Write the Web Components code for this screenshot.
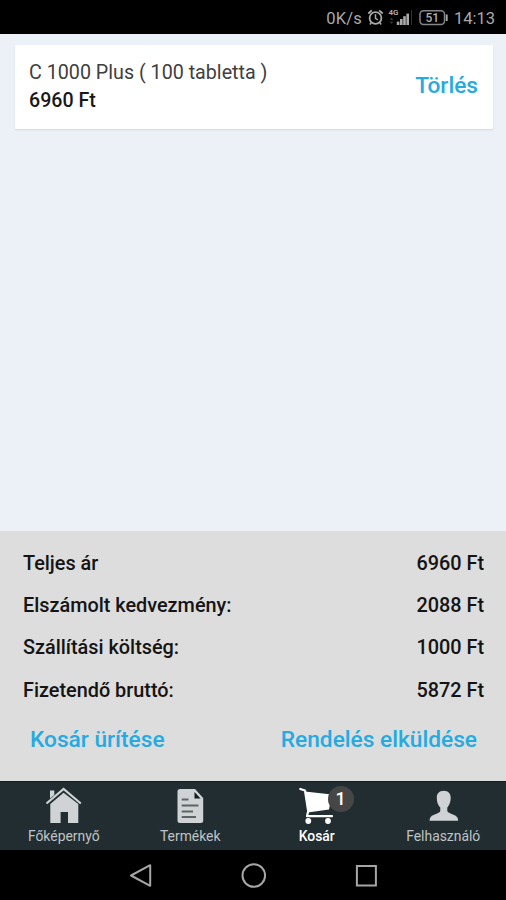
<!DOCTYPE html>
<html lang="hu">
<head>
<meta charset="utf-8">
<title>Kosár</title>
<style>
html, body {
	margin: 0;
	height: 100%;
}
body {
	font-family: Roboto, "Liberation Sans", sans-serif;
	overflow: hidden;
}
</style>
</head>
<body>
<shop-app></shop-app>

<script>
function makeTemplate(html) {
	const template = document.createElement('template')
	template.innerHTML = html
	return template
}

class BaseElement extends HTMLElement {

	constructor(template) {
		super()
		this.attachShadow({ mode: 'open' })
		this.shadowRoot.appendChild(template.content.cloneNode(true))
	}

}

// ---- status bar

const statusTemplate = makeTemplate(`
<style>
:host {
	display: flex;
	align-items: center;
	justify-content: flex-end;
	box-sizing: border-box;
	height: 34px;
	padding: 2px 11px 0 0;
	background: #000;
	color: #a9a9a9;
	font-size: 16.5px;
	line-height: 20px;
	white-space: nowrap;
}
svg { display: block; flex: none; }
.speed { margin: 1px 5px 0 0; letter-spacing: 0.2px; }
.clock { margin: 1px 0 0 5px; }
</style>
<span class="speed">0K/s</span>
<svg width="82" height="20" viewBox="0 0 82 20" fill="none" stroke="#a9a9a9">
	<circle cx="8.5" cy="10" r="5.9" stroke-width="1.8"/>
	<path d="M8.5 6.3V10.3L11 12" stroke-width="1.5"/>
	<path d="M1.3 5.5L4.8 2.4M12.2 2.4L15.7 5.5" stroke-width="1.9"/>
	<path d="M4.3 14.6L2.8 16.4M12.7 14.6L14.2 16.4" stroke-width="1.5"/>
	<g fill="#a9a9a9" stroke="none">
		<text x="21.5" y="7.4" font-size="8" font-weight="700" textLength="10" lengthAdjust="spacingAndGlyphs">4G</text>
		<rect x="29.8" y="13.6" width="2.6" height="3.4"/>
		<rect x="33" y="11" width="2.6" height="6"/>
		<rect x="36.2" y="8.2" width="2.6" height="8.8"/>
		<rect x="39.4" y="5.6" width="2.6" height="11.4"/>
		<rect x="44" y="2" width="1" height="15" fill="#303030"/>
		<path d="M24.500 9.500L26.500 12H22.500ZM24.500 16L22.500 13.500H26.500Z" fill="#333"/>
	</g>
	<rect x="53" y="2.8" width="24.500" height="13.8" rx="3.5" stroke="#858585" stroke-width="1.5"/>
	<path d="M79.700 6.500V13" stroke-width="1.900"/>
	<text x="65.200" y="14" font-size="12" font-weight="500" text-anchor="middle" fill="#b0b0b0" stroke="none">51</text>
</svg>
<span class="clock">14:13</span>
`)

class StatusBar extends BaseElement {
	constructor() { super(statusTemplate) }
}

customElements.define('status-bar', StatusBar)

// ---- text button

const linkTemplate = makeTemplate(`
<style>
:host {
	display: block;
	color: #25aae1;
	font-size: 22.7px;
	font-weight: 500;
	line-height: 28px;
	white-space: nowrap;
}
</style>
<slot></slot>
`)

class LinkButton extends BaseElement {
	constructor() { super(linkTemplate) }
}

customElements.define('link-button', LinkButton)

// ---- cart item

const itemTemplate = makeTemplate(`
<style>
:host {
	display: flex;
	align-items: center;
	justify-content: space-between;
	box-sizing: border-box;
	height: 84px;
	padding: 0 15px 0 14px;
	background: #fff;
	border-radius: 1px;
	box-shadow: 0 1px 2px rgba(0, 0, 0, 0.1);
	font-size: 19.6px;
	line-height: 28px;
	white-space: nowrap;
}
.name { color: #404040; font-size: 19.7px; }
.price { color: #181818; font-weight: 500; }
::slotted(link-button) { margin-bottom: 2px; }
</style>
<div>
	<div class="name"><slot name="name"></slot></div>
	<div class="price"><slot name="price"></slot></div>
</div>
<slot name="action"></slot>
`)

class CartItem extends BaseElement {
	constructor() { super(itemTemplate) }
}

customElements.define('cart-item', CartItem)

// ---- summary

const rowTemplate = makeTemplate(`
<style>
:host {
	display: flex;
	justify-content: space-between;
	height: 42.2px;
	color: #141414;
	font-size: 19.85px;
	font-weight: 500;
	line-height: 28px;
	white-space: nowrap;
}
</style>
<span><slot></slot></span>
<span><slot name="amount"></slot></span>
`)

class SummaryRow extends BaseElement {
	constructor() { super(rowTemplate) }
}

customElements.define('summary-row', SummaryRow)

const summaryTemplate = makeTemplate(`
<style>
:host {
	display: block;
	box-sizing: border-box;
	height: 250px;
	padding: 19px 22px 0 23px;
	background: #ddd;
}
.actions {
	display: flex;
	justify-content: space-between;
	padding: 7px 7px 0;
}
</style>
<slot></slot>
<div class="actions"><slot name="actions"></slot></div>
`)

class CartSummary extends BaseElement {
	constructor() { super(summaryTemplate) }
}

customElements.define('cart-summary', CartSummary)

// ---- tabs

const icons = {
	home: `
		<g transform="translate(0.8 0)">
			<path d="M12.700 16.500L29.800 2L47 16.500" fill="none" stroke="#d0d3d5" stroke-width="2.200"/>
			<path d="M16.200 3.500H20.500V8L16.200 11.500Z"/>
			<path d="M16.500 17L29.800 5.800L44.500 17V36H34.200V25H26.800V36H16.500Z"/>
		</g>`,
	document: `
		<path d="M20 2H35L43.200 11V33.500Q43.200 36 40.700 36H20Q17.500 36 17.500 33.500V4.500Q17.500 2 20 2Z"/>
		<path d="M34.500 5V11.500H40.500Z" fill="#111a1f"/>
		<path d="M21.700 12.500H28.500M21.700 18.500H38.500M21.700 24.500H33M21.700 30H36" stroke="#5c6469" stroke-width="1.800"/>`,
	cart: `
		<path d="M14.300 2L19 3.500L22.200 24L21 29.200H46" fill="none" stroke="#fff" stroke-width="2.200" stroke-linecap="round" stroke-linejoin="round"/>
		<path d="M18.800 4.500L46 7.500L43 22.500L21.800 25.500Z"/>
		<circle cx="22.300" cy="34" r="2.900"/>
		<circle cx="42" cy="34" r="2.900"/>`,
	user: `
		<path d="M30.700 3.700C35 3.700 38 6.500 37.700 11C37.500 16 36.200 18.300 34.300 20.500V24C35 27 43.500 27 44.800 31.500L45.200 33.800H16.500L16.900 31.500C18.200 27 26.700 27 27.300 24V20.500C25.200 18.300 24 16 23.800 11C23.500 6.500 26.500 3.700 30.700 3.700Z"/>`
}

const tabTemplate = makeTemplate(`
<style>
:host {
	display: flex;
	flex: 1 1 0;
	flex-direction: column;
	align-items: center;
	position: relative;
	padding-top: 5px;
	color: #bfc3c5;
	font-size: 13.9px;
	line-height: 18px;
	white-space: nowrap;
}
:host([active]) { color: #fff; font-weight: 500; }
svg { display: block; fill: #d0d3d5; }
:host([active]) svg { fill: #fff; }
.label { margin: 2px 0 0 1px; }
.badge {
	position: absolute;
	top: 4px;
	left: 75px;
	width: 26px;
	height: 26px;
	border-radius: 50%;
	background: #464647;
	color: #fff;
	font-size: 18px;
	font-weight: 500;
	line-height: 26px;
	text-align: center;
	text-indent: -1px;
}
.badge[hidden] { display: none; }
</style>
<svg width="60" height="38" viewBox="0 0 60 38"></svg>
<span class="label"><slot></slot></span>
<span class="badge" hidden></span>
`)

class TabItem extends BaseElement {

	constructor() { super(tabTemplate) }

	connectedCallback() {
		this.shadowRoot.querySelector('svg').innerHTML = icons[this.getAttribute('icon')]
		const count = this.getAttribute('badge')
		if (count) {
			const badge = this.shadowRoot.querySelector('.badge')
			badge.textContent = count
			badge.hidden = false
		}
	}

}

customElements.define('tab-item', TabItem)

const tabBarTemplate = makeTemplate(`
<style>
:host {
	display: flex;
	box-sizing: border-box;
	height: 69px;
	background: #222d32;
	border-top: 1px solid #151e22;
}
</style>
<slot></slot>
`)

class TabBar extends BaseElement {
	constructor() { super(tabBarTemplate) }
}

customElements.define('tab-bar', TabBar)

// ---- system buttons

const navTemplate = makeTemplate(`
<style>
:host {
	display: flex;
	align-items: center;
	justify-content: center;
	gap: 88px;
	height: 50px;
	background: #000;
}
svg { display: block; fill: none; stroke: #a6a6a6; stroke-width: 2; }
</style>
<svg width="25" height="25" viewBox="0 0 25 25"><path d="M3 12.500L22.200 2.200V22.800Z" stroke-linejoin="round"/></svg>
<svg width="25" height="25" viewBox="0 0 25 25"><circle cx="12.800" cy="12.500" r="11.300"/></svg>
<svg width="25" height="25" viewBox="0 0 25 25"><rect x="2.900" y="3" width="19" height="19.500"/></svg>
`)

class SystemNav extends BaseElement {
	constructor() { super(navTemplate) }
}

customElements.define('system-nav', SystemNav)

// ---- page

const appTemplate = makeTemplate(`
<style>
:host {
	display: flex;
	flex-direction: column;
	height: 900px;
	background: #ecf0f7;
}
main {
	flex: 1;
	padding: 11px 13px 0 15px;
}
</style>
<status-bar></status-bar>
<main>
	<cart-item>
		<span slot="name">C 1000 Plus ( 100 tabletta )</span>
		<span slot="price">6960 Ft</span>
		<link-button slot="action">Törlés</link-button>
	</cart-item>
</main>
<cart-summary>
	<summary-row>Teljes ár<span slot="amount">6960 Ft</span></summary-row>
	<summary-row>Elszámolt kedvezmény:<span slot="amount">2088 Ft</span></summary-row>
	<summary-row>Szállítási költség:<span slot="amount">1000 Ft</span></summary-row>
	<summary-row>Fizetendő bruttó:<span slot="amount">5872 Ft</span></summary-row>
	<link-button slot="actions">Kosár ürítése</link-button>
	<link-button slot="actions">Rendelés elküldése</link-button>
</cart-summary>
<tab-bar>
	<tab-item icon="home">Főképernyő</tab-item>
	<tab-item icon="document">Termékek</tab-item>
	<tab-item icon="cart" badge="1" active>Kosár</tab-item>
	<tab-item icon="user">Felhasználó</tab-item>
</tab-bar>
<system-nav></system-nav>
`)

class ShopApp extends BaseElement {
	constructor() { super(appTemplate) }
}

customElements.define('shop-app', ShopApp)
</script>
</body>
</html>
